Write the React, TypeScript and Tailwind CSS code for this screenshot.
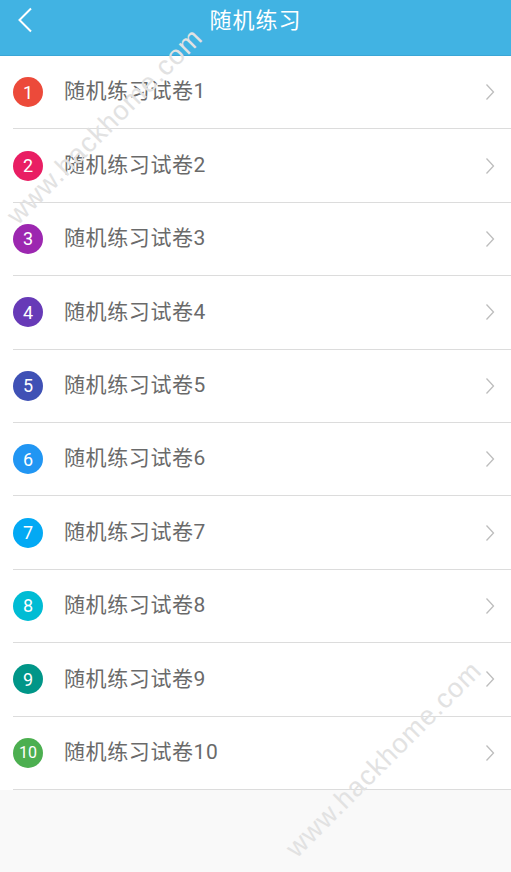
const colors = [
  "bg-[#ec4a3a]",
  "bg-[#e91e63]",
  "bg-[#9c27b0]",
  "bg-[#673ab7]",
  "bg-[#3f51b5]",
  "bg-[#2196f3]",
  "bg-[#03a9f4]",
  "bg-[#00bcd4]",
  "bg-[#009688]",
  "bg-[#4caf50]",
];

function Chevron({ className }: { className?: string }) {
  return (
    <svg viewBox="0 0 10 18" className={className} fill="none" stroke="currentColor" strokeWidth="1.3">
      <path d="M1.5 1.5 L8.5 9 L1.5 16.5" />
    </svg>
  );
}

export default function App() {
  return (
    <div
      className="relative w-[511px] h-[872px] overflow-hidden bg-[#f9f9f9]"
      style={{ fontFamily: '"Roboto", "Noto Sans CJK SC", sans-serif' }}
    >
      {/* Header */}
      <div className="h-[56px] bg-[#41b3e3] border-b border-[#3aa6d6]">
        <div className="relative h-[40px] flex items-center justify-center">
          <svg viewBox="0 0 16 26" className="absolute left-[17px] top-[7px] w-[16px] h-[26px]" fill="none" stroke="white" strokeWidth="2">
            <path d="M14 1.5 L2.5 13 L14 24.5" />
          </svg>
          <span className="text-white text-[22px] tracking-[1px]">随机练习</span>
        </div>
      </div>

      {/* List */}
      <div className="bg-white">
        {colors.map((c, i) => (
          <div key={i} className="pl-[13px]">
            <div className="h-[73.4px] flex items-center border-b border-[#dcdcdc]">
              <div className={`w-[30px] h-[30px] rounded-full ${c} flex items-center justify-center text-white ${i === 9 ? "text-[16px]" : "text-[18px]"}`}>
                {i + 1}
              </div>
              <span className="ml-[21px] text-[21px] tracking-[0.6px] text-[#6a6a6a]">随机练习试卷{i + 1}</span>
              <Chevron className="ml-auto mr-[16px] w-[10px] h-[18px] text-[#bdbdbd]" />
            </div>
          </div>
        ))}
      </div>

      {/* Watermarks */}
      <div className="absolute left-[-27px] top-[106px] -rotate-45 text-[27px] text-[#e2e2e2] tracking-[1px] pointer-events-none whitespace-nowrap" style={{ fontFamily: '"Liberation Sans", sans-serif' }}>
        www.hackhome.com
      </div>
      <div className="absolute left-[252px] top-[739px] -rotate-45 text-[27px] text-[#e2e2e2] tracking-[1px] pointer-events-none whitespace-nowrap" style={{ fontFamily: '"Liberation Sans", sans-serif' }}>
        www.hackhome.com
      </div>
    </div>
  );
}
